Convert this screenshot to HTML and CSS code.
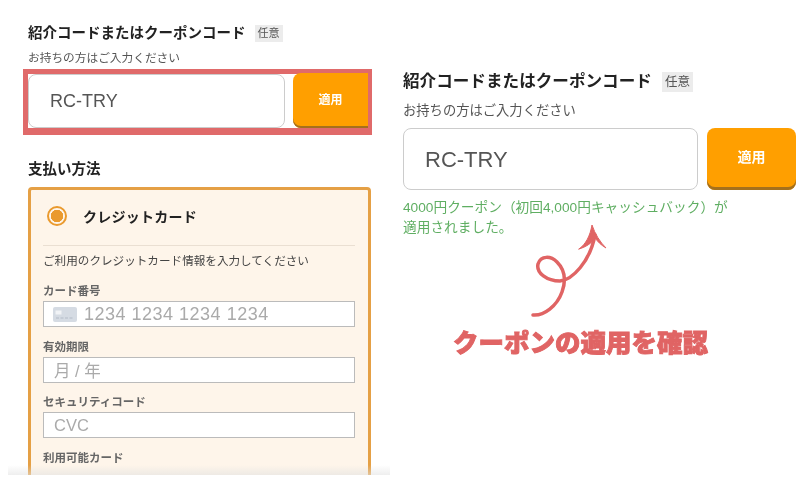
FILE: index.html
```html
<!DOCTYPE html>
<html lang="ja">
<head>
<meta charset="utf-8">
<title>クーポンの適用を確認</title>
<link rel="stylesheet" href="styles.css">
</head>
<body>
<main class="page">
  <section class="left">
    <div class="head">
      <h2 class="title">紹介コードまたはクーポンコード</h2>
      <span class="badge">任意</span>
    </div>
    <p class="sub">お持ちの方はご入力ください</p>
    <div class="highlight">
      <div class="code">RC-TRY</div>
      <button class="apply">適用</button>
    </div>
    <h2 class="title pay-title">支払い方法</h2>
    <div class="card">
      <div class="radio-row">
        <span class="radio"></span>
        <span class="radio-label">クレジットカード</span>
      </div>
      <p class="card-note">ご利用のクレジットカード情報を入力してください</p>
      <div class="field-label">カード番号</div>
      <div class="field">
        <svg class="card-icon" width="24" height="15" viewBox="0 0 24 15">
          <rect width="24" height="15" rx="2" fill="#d5dbe3"/>
          <rect x="2.5" y="3.5" width="6" height="4" fill="#f1f3f6"/>
          <path d="M3 11h18" stroke="#b3bcc8" stroke-width="1.2" stroke-dasharray="3 1.5"/>
        </svg>
        <span class="placeholder number">1234 1234 1234 1234</span>
      </div>
      <div class="field-label">有効期限</div>
      <div class="field"><span class="placeholder">月 / 年</span></div>
      <div class="field-label">セキュリティコード</div>
      <div class="field"><span class="placeholder">CVC</span></div>
      <div class="field-label">利用可能カード</div>
    </div>
  </section>
  <section class="right">
    <div class="head">
      <h2 class="title big">紹介コードまたはクーポンコード</h2>
      <span class="badge big">任意</span>
    </div>
    <p class="sub big">お持ちの方はご入力ください</p>
    <div class="row">
      <div class="code big">RC-TRY</div>
      <button class="apply big">適用</button>
    </div>
    <p class="ok">4000円クーポン（初回4,000円キャッシュバック）が<br>適用されました。</p>
    <svg class="arrow" width="90" height="100" viewBox="0 0 90 100" fill="none" stroke="#e06464" stroke-linecap="round" stroke-linejoin="round">
      <path d="M3 91C14 92 27 82 32 68C36 57 35 46 27 38C21 32 11 31 8 40C6 49 17 57 30 57C42 56 60 38 65 11" stroke-width="3.5"/>
      <path d="M49 25C56 20 60 12 62 1C65 10 70 18 76 24C71 21 68 18 65 14C62 19 56 23 49 25Z" fill="#e06464" stroke-width="1"/>
    </svg>
    <p class="callout">クーポンの適用を確認</p>
  </section>
</main>
</body>
</html>
```
FILE: styles.css
```css
* { box-sizing: border-box; }
html, body { margin: 0; padding: 0; background: #fff; }
body {
  width: 800px;
  height: 495px;
  overflow: hidden;
  font-family: "Liberation Sans", "Noto Sans CJK JP", sans-serif;
  color: #222;
}
.page { display: flex; align-items: flex-start; filter: blur(0.35px); }
p, h2 { margin: 0; }

/* Left panel */
.left {
  position: relative;
  width: 400px;
  height: 475px;
  overflow: hidden;
  padding: 23px 0 0 28px;
}
.left::after {
  content: "";
  position: absolute;
  left: 8px;
  width: 382px;
  bottom: 0;
  height: 10px;
  background: linear-gradient(rgba(225,225,225,0), rgba(225,225,225,.55));
}
.head { display: flex; align-items: center; height: 20px; }
.title { font-size: 14.5px; line-height: 20px; font-weight: 700; color: #222; }
.badge {
  margin-left: 9px;
  padding: 0 3px;
  height: 17px;
  line-height: 17px;
  font-size: 11px;
  background: #ececec;
  color: #555;
}
.sub { margin-top: 7px; font-size: 11.7px; line-height: 16px; color: #555; }
.highlight {
  display: flex;
  align-items: stretch;
  gap: 8px;
  width: 349px;
  height: 66px;
  margin: 3px 0 0 -5px;
  border-style: solid;
  border-color: #e06a6a;
  border-width: 5px 4px 7px 5px;
}
.code {
  flex: 0 0 257px;
  display: flex;
  align-items: center;
  padding-left: 21px;
  background: #fff;
  border: 1px solid #ccc;
  border-radius: 8px;
  font-size: 18px;
  color: #555;
}
.apply {
  flex: 1;
  margin-top: -1px;
  padding: 0 0 5px;
  border: 0;
  border-radius: 8px 0 0 8px;
  background: #ff9f00;
  box-shadow: inset 0 -2px 0 #a5701c;
  color: #fff;
  font: 700 12px "Liberation Sans", "Noto Sans CJK JP", sans-serif;
}
.pay-title { margin-top: 24px; }

.card {
  width: 343px;
  height: 320px;
  margin-top: 8px;
  padding: 0 13px 0 12px;
  background: #fef5ea;
  border: 3px solid #e5a045;
  border-radius: 4px;
}
.radio-row {
  display: flex;
  align-items: center;
  height: 56px;
  padding: 0 0 4px 4px;
  border-bottom: 1px solid #eadfd2;
}
.radio {
  width: 20px;
  height: 20px;
  border-radius: 50%;
  border: 2px solid #ea9a2e;
  background: radial-gradient(circle, #ea9a2e 0 6px, #fef5ea 6.5px);
}
.radio-label { margin-left: 16px; font-size: 14px; font-weight: 700; letter-spacing: .25px; color: #222; }
.card-note { margin-top: 6px; font-size: 11.6px; line-height: 17px; color: #444; }
.field-label { margin-top: 11.5px; height: 17px; font-size: 11.5px; line-height: 17px; font-weight: 700; color: #666; }
.card-note + .field-label { margin-top: 14px; }
.field {
  display: flex;
  align-items: center;
  height: 26px;
  margin-top: 1px;
  padding-left: 10px;
  background: #fff;
  border: 1px solid #bbb;
}
.card-icon { margin: 0 7px 0 -1px; }
.placeholder { font-size: 16.5px; color: #aaa; }
.placeholder.number { font-size: 18px; letter-spacing: .5px; }

/* Right panel */
.right {
  display: flex;
  flex-direction: column;
  width: 400px;
  padding: 71px 0 0 3px;
}
.head:has(.big) { height: 21px; }
.title.big { font-size: 16.6px; line-height: 21px; }
.badge.big { margin-left: 10px; padding: 0 3px; height: 20px; line-height: 20px; font-size: 12.5px; }
.sub.big { margin-top: 9px; font-size: 13.3px; line-height: 19px; }
.row { display: flex; gap: 9px; height: 62px; margin-top: 8px; }
.code.big { flex: 0 0 295px; padding: 2px 0 0 21px; font-size: 22px; }
.apply.big {
  flex: 0 0 89px;
  margin-top: 0;
  padding-bottom: 6px;
  border-radius: 8px;
  box-shadow: inset 0 -3px 0 #a5701c;
  font-size: 14px;
}
.ok { margin-top: 8px; font-size: 13.7px; line-height: 20px; color: #5fae62; white-space: nowrap; }
.arrow { margin: -14px 0 0 127px; overflow: visible; }
.callout {
  margin: 3px 0 0 50px;
  font-size: 25.5px;
  line-height: 32px;
  font-weight: 900;
  color: #e06464;
  -webkit-text-stroke: .9px #e06464;
  white-space: nowrap;
}
```
